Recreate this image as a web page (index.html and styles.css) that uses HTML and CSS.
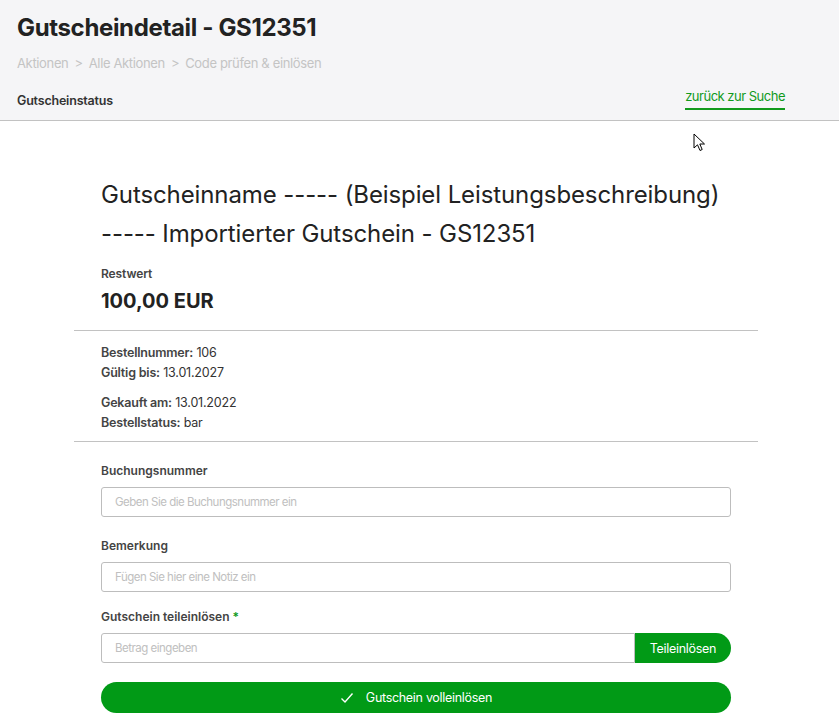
FILE: index.html
```html
<!DOCTYPE html>
<html lang="de">
<head>
  <meta charset="UTF-8">
  <meta name="viewport" content="width=device-width, initial-scale=1.0">
  <title>Gutscheindetail - GS12351</title>
  <link rel="stylesheet" href="styles.css">
</head>
<body>

<header class="page-header">
  <h1>Gutscheindetail - GS12351</h1>
  <nav class="breadcrumb">
    <a href="#">Aktionen</a>
    <span class="sep">&gt;</span>
    <a href="#">Alle Aktionen</a>
    <span class="sep">&gt;</span>
    <span>Code prüfen &amp; einlösen</span>
  </nav>
  <div class="tabs">
    <span class="tab-title">Gutscheinstatus</span>
    <a href="#" class="back-link">zurück zur Suche</a>
  </div>
</header>

<main class="detail">
  <section class="block">
    <h2>Gutscheinname ----- (Beispiel Leistungsbeschreibung) ----- Importierter Gutschein - GS12351</h2>
    <div class="label">Restwert</div>
    <div class="amount">100,00 EUR</div>
  </section>

  <section class="block info">
    <div class="info-group">
      <p><b>Bestellnummer:</b> 106</p>
      <p><b>Gültig bis:</b> 13.01.2027</p>
    </div>
    <div class="info-group">
      <p><b>Gekauft am:</b> 13.01.2022</p>
      <p><b>Bestellstatus:</b> bar</p>
    </div>
  </section>

  <form class="block redeem">
    <label class="field field-booking">
      <span class="label">Buchungsnummer</span>
      <input type="text" placeholder="Geben Sie die Buchungsnummer ein">
    </label>
    <label class="field field-note">
      <span class="label">Bemerkung</span>
      <input type="text" placeholder="Fügen Sie hier eine Notiz ein">
    </label>
    <div class="field field-part">
      <span class="label">Gutschein teileinlösen <i class="req">*</i></span>
      <div class="input-group">
        <input type="text" placeholder="Betrag eingeben">
        <button type="button" class="btn-part">Teileinlösen</button>
      </div>
    </div>
    <button type="submit" class="btn-full">
      <svg width="14" height="12" viewBox="0 0 14 12"><path d="M1.5 6.5 L5 10 L12.5 1.5" fill="none" stroke="#fff" stroke-width="1.4"/></svg>
      Gutschein volleinlösen
    </button>
  </form>
</main>

<svg class="cursor" width="14" height="20" viewBox="0 0 14 20"><path d="M1 1 L1 15 L4.5 11.8 L7 17.5 L9.2 16.5 L6.8 11 L11.5 11 Z" fill="#fff" stroke="#000" stroke-width="1"/></svg>

</body>
</html>
```

FILE: styles.css
```css
* { box-sizing: border-box; }

body {
  margin: 0;
  font-family: Inter, "Noto Sans", sans-serif;
  color: #2a2a2a;
  background: #fff;
  position: relative;
  min-height: 100vh;
}

.page-header {
  background: #f5f5f7;
  border-bottom: 1px solid #c2c2c2;
  padding: 12px 17px 0;
}

.page-header h1 {
  margin: 0;
  font-size: 24px;
  font-weight: 700;
  line-height: 32px;
  letter-spacing: -0.35px;
  color: #222;
}

.breadcrumb {
  margin-top: 11px;
  font-size: 13px;
  color: #c4c4c4;
  letter-spacing: -0.35px;
  display: flex;
  gap: 6px;
}

.breadcrumb a {
  color: #c4c4c4;
  text-decoration: none;
}

.tabs {
  display: flex;
  justify-content: space-between;
  align-items: flex-end;
  margin-top: 20px;
  height: 29px;
}

.tab-title {
  font-size: 12.5px;
  font-weight: 600;
  color: #333;
  letter-spacing: -0.2px;
  padding-bottom: 12px;
}

.back-link {
  margin-right: 37px;
  margin-bottom: 10px;
  padding-bottom: 4px;
  font-size: 13px;
  color: #109a1c;
  text-decoration: none;
  letter-spacing: -0.5px;
  border-bottom: 2px solid #119a1c;
}

.detail {
  width: 684px;
  margin: 0 0 0 74px;
}

.block {
  padding: 0 27px;
}

.block + .block {
  border-top: 1px solid #c2c2c2;
}

h2 {
  margin: 54px 0 0;
  font-size: 24px;
  font-weight: 400;
  line-height: 39px;
  letter-spacing: -0.1px;
  color: #222;
}

.label {
  display: block;
  font-size: 12px;
  line-height: 15px;
  font-weight: 600;
  color: #444;
  letter-spacing: 0;
}

h2 + .label {
  margin-top: 13px;
  letter-spacing: -0.1px;
}

.amount {
  margin-top: 8px;
  padding-bottom: 17px;
  font-size: 20px;
  font-weight: 700;
  letter-spacing: 0;
  color: #222;
}

.info {
  padding-top: 12px;
  padding-bottom: 8px;
}

.info-group + .info-group {
  margin-top: 10px;
}

.info p {
  margin: 0;
  font-size: 12.5px;
  line-height: 20px;
  letter-spacing: -0.2px;
  color: #333;
}

.info b {
  font-weight: 600;
  color: #444;
}

.redeem {
  padding-top: 21px;
}

.field {
  display: block;
}

.field .label {
  margin-bottom: 9px;
}

.field-booking { margin-bottom: 21px; }
.field-note { margin-bottom: 17px; }
.field-part { margin-bottom: 19px; }

.req {
  font-style: normal;
  color: #109a1c;
}

input[type="text"] {
  display: block;
  width: 100%;
  height: 30px;
  border: 1px solid #bdbdbd;
  border-radius: 3px;
  padding: 0 13px;
  font-family: inherit;
  font-size: 11.5px;
  letter-spacing: -0.5px;
  color: #333;
}

input::placeholder {
  color: #c0c0c0;
}

.input-group {
  display: flex;
}

.input-group input {
  flex: 1;
  border-radius: 3px 0 0 3px;
}

.btn-part {
  width: 96px;
  height: 30px;
  border: none;
  border-radius: 0 15px 15px 0;
  background: #019a16;
  color: #fff;
  font-family: inherit;
  font-size: 12.5px;
  letter-spacing: -0.3px;
}

.btn-full {
  display: flex;
  align-items: center;
  justify-content: center;
  gap: 12px;
  width: 100%;
  height: 31px;
  border: none;
  border-radius: 16px;
  background: #019a16;
  color: #fff;
  font-family: inherit;
  font-size: 12.5px;
  letter-spacing: -0.3px;
}

.cursor {
  position: absolute;
  left: 693px;
  top: 133px;
}
```
